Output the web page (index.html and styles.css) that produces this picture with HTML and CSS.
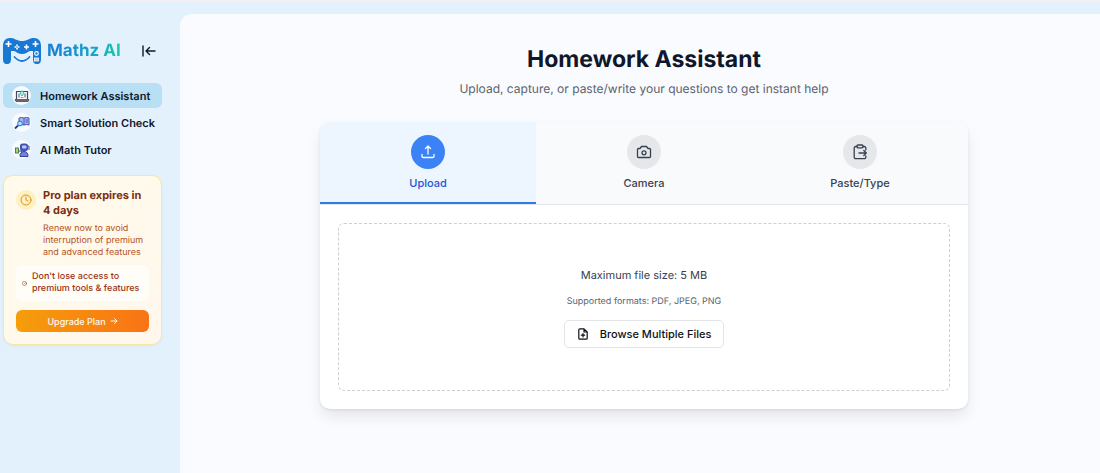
FILE: index.html
```html
<!DOCTYPE html>
<html lang="en">
<head>
<meta charset="utf-8">
<meta name="viewport" content="width=device-width, initial-scale=1">
<title>Mathz AI – Homework Assistant</title>
<link rel="stylesheet" href="styles.css">
</head>
<body>
<div class="app">
  <aside class="sidebar">
    <div class="brand">
      <a class="brand-link" href="#">
        <svg class="logo" viewBox="0 0 38 26" aria-hidden="true">
          <path fill="#1878d2" d="M0 8C0 3 2.500 0 7 0c4 0 5 1.500 7 2 2 .6 3 1 5 1s3-.4 5-1c2-.5 3-2 7-2 4.500 0 7 3 7 8v13c0 3-1 5-4 5s-4-2-4-5v-8c-2 0-3.500-.5-5 1-1.500 1.200-3.500 2-6 2s-4.500-.8-6-2c-1.500-1.500-3-1-5-1v8c0 3-1 5-4 5s-4-2-4-5z"/>
          <path d="M5.500 3v6M2.500 6h6M14 6.500v5M11.500 9h5M23.500 6.500v5M21 9h5M32.500 3v6M29.500 6h6" stroke="#fff" stroke-width="1.600" fill="none"/>
          <path d="M11.500 19q7.500 8 15 0" stroke="#1878d2" stroke-width="1.800" stroke-linecap="round" fill="none"/>
          <circle cx="33.500" cy="15.500" r="1.800" fill="none" stroke="#fff" stroke-width="1.200"/>
          <rect x="31.500" y="20" width="4" height="3" fill="#a6d2f5" stroke="#fff" stroke-width=".8"/>
          <circle cx="14" cy="9" r=".8" fill="#1878d2"/>
        </svg>
        <span class="brand-name">Mathz AI</span>
      </a>
      <button class="collapse" type="button" aria-label="Collapse sidebar">
        <svg viewBox="0 0 14 12" fill="none" stroke="currentColor" stroke-width="1.400" stroke-linecap="round" stroke-linejoin="round"><path d="M1 1v10M13 6H4M7.500 2.500 4 6l3.500 3.500"/></svg>
      </button>
    </div>
    <nav class="nav">
      <a class="nav-item active" href="#">
        <span class="nav-icon"><svg viewBox="0 0 16 16" fill="none">
          <path d="M2.500 11V3.500h11V11" stroke="#414b57" stroke-width="1.200"/><path d="M1 11.500h14l-1 2H2z" fill="#71666a" stroke="#414b57" stroke-width=".8"/>
          <path d="M5 5.500v4M11 5.500v4" stroke="#555b66"/><path d="M8 2.500 10 5 8 8 6 5zM6.500 9.500h3" stroke="#29bdb7" stroke-width=".9" fill="#b7eeeb"/>
        </svg></span>Homework Assistant</a>
      <a class="nav-item" href="#">
        <span class="nav-icon"><svg viewBox="0 0 16 16" fill="none">
          <path d="M5 3q2-1 5 0 3-1 5 0v7q-3-1-5 0-3-1-5 0z" fill="#a9b6f2" stroke="#4656b4"/><path d="M10 3v7M11.500 5H14M11.500 7H14" stroke="#4656b4"/>
          <circle cx="6" cy="8.500" r="2.400" fill="#9deafc" stroke="#2874b5"/><path d="m4 10.500-3 3" stroke="#283c86" stroke-width="1.800"/>
        </svg></span>Smart Solution Check</a>
      <a class="nav-item" href="#">
        <span class="nav-icon"><svg viewBox="0 0 16 16">
          <rect x="6" y="1.500" width="8" height="7.500" rx="2.500" fill="#4353b5"/><rect x="8" y="3.500" width="4.500" height="3" rx="1" fill="#bfcbfa"/>
          <path d="M6 14.500q0-5 4-5t4 5z" fill="#7182dc" stroke="#35439c"/><path d="M4.500 9h3v2" fill="none" stroke="#35439c"/><rect x="1.500" y="6" width="3" height="5" fill="#a5df50" stroke="#375c5b" stroke-width=".8"/><path d="M14 4h1v4" fill="none" stroke="#35439c"/>
        </svg></span>AI Math Tutor</a>
    </nav>
    <section class="plan">
      <div class="plan-head">
        <span class="plan-clock"><svg viewBox="0 0 24 24" fill="none" stroke="currentColor" stroke-width="2" stroke-linecap="round"><circle cx="12" cy="12" r="10"/><path d="M12 6v6l4 2"/></svg></span>
        <div>
          <h2 class="plan-title">Pro plan expires in 4 days</h2>
          <p class="plan-text">Renew now to avoid interruption of premium and advanced features</p>
        </div>
      </div>
      <p class="plan-note"><svg viewBox="0 0 24 24" fill="none" stroke="currentColor" stroke-width="2.500" stroke-linecap="round" aria-hidden="true"><circle cx="12" cy="12" r="10"/><path d="M12 12l5-4"/></svg><span>Don't lose access to premium tools &amp; features</span></p>
      <button class="upgrade" type="button">Upgrade Plan <svg viewBox="0 0 8 8" fill="none" stroke="currentColor" stroke-linecap="round" stroke-linejoin="round" aria-hidden="true"><path d="M1 4h6M4.500 1.500 7 4 4.500 6.500"/></svg></button>
    </section>
  </aside>
  <main class="main">
    <header class="intro">
      <h1 class="title">Homework Assistant</h1>
      <p class="subtitle">Upload, capture, or paste/write your questions to get instant help</p>
    </header>
    <section class="card">
      <div class="tabs" role="tablist">
        <button class="tab selected" type="button" role="tab" aria-selected="true">
          <span class="tab-icon"><svg viewBox="0 0 16 16"><path d="M8 10V2.500M5.500 4.500 8 2l2.500 2.500M2 10.500v1.700A1.300 1.300 0 0 0 3.300 13.500h9.400a1.300 1.300 0 0 0 1.300-1.300v-1.700"/></svg></span>Upload</button>
        <button class="tab" type="button" role="tab" aria-selected="false">
          <span class="tab-icon"><svg viewBox="0 0 16 16"><path d="M5.500 2.500h5L12 4.500h1.500a1 1 0 0 1 1 1v7a1 1 0 0 1-1 1h-11a1 1 0 0 1-1-1v-7a1 1 0 0 1 1-1H4z"/><circle cx="8" cy="8.800" r="2"/></svg></span>Camera</button>
        <button class="tab" type="button" role="tab" aria-selected="false">
          <span class="tab-icon"><svg viewBox="0 0 16 16"><rect x="5" y="1" width="6" height="2.800" rx="1"/><path d="M5 2.500H3.700A1.500 1.500 0 0 0 2.200 4v9.200a1.500 1.500 0 0 0 1.500 1.500h8.600a1.500 1.500 0 0 0 1.500-1.500V12M11 2.500h1.300A1.500 1.500 0 0 1 13.800 4v2M7 9h7M11.800 6.500 14.300 9l-2.500 2.500"/></svg></span>Paste/Type</button>
      </div>
      <div class="panel" role="tabpanel">
        <div class="dropzone">
          <p class="limit">Maximum file size: 5 MB</p>
          <p class="formats">Supported formats: PDF, JPEG, PNG</p>
          <button class="browse" type="button"><svg viewBox="0 0 12 12" fill="none" stroke="currentColor" stroke-width="1.200" stroke-linejoin="round" stroke-linecap="round" aria-hidden="true"><path d="M7 .8H2.800a1 1 0 0 0-1 1v8.400a1 1 0 0 0 1 1h6.400a1 1 0 0 0 1-1V4zV4h3.200M6 5.500v3.400M4.300 7.200h3.400"/></svg>Browse Multiple Files</button>
        </div>
      </div>
    </section>
  </main>
</div>
</body>
</html>
```
FILE: styles.css
```css
* { box-sizing: border-box; }
body {
  margin: 0;
  font-family: Inter, "Liberation Sans", sans-serif;
  font-size: 11px;
  color: #0f172a;
  background: #e3f1fc;
  text-rendering: geometricPrecision;
}
h1, h2, p { margin: 0; }
a { color: inherit; text-decoration: none; }
button { font: inherit; cursor: pointer; }
svg { display: block; flex: none; }

.app {
  display: grid;
  grid-template-columns: 180px 1fr;
  min-height: 100vh;
  border-top: 2px solid #f6eff1;
}
.sidebar { padding: 34px 18px 0 3px; }
.brand {
  display: flex;
  align-items: center;
  justify-content: space-between;
  height: 30px;
  padding-right: 6px;
}
.brand-link { display: flex; align-items: center; gap: 6px; }
.logo { width: 38px; height: 26px; }
.brand-name {
  font-size: 17px;
  font-weight: 700;
  line-height: 26px;
  color: transparent;
  background: linear-gradient(90deg, #1b82d1 10%, #1aa0c8 60%, #19c9a9);
  background-clip: text;
  -webkit-background-clip: text;
}
.collapse { padding: 0; border: 0; background: none; color: #111827; }
.collapse svg { width: 14px; height: 12px; }

.nav { display: grid; gap: 2px; margin-top: 17px; }
.nav-item {
  display: flex;
  align-items: center;
  gap: 9px;
  height: 25px;
  padding-left: 9px;
  border-radius: 6px;
  font-weight: 600;
  white-space: nowrap;
}
.nav-item.active { background: #b9dff5; }
.nav-icon {
  display: grid;
  place-items: center;
  width: 19px;
  height: 19px;
  border-radius: 50%;
  background: #f8fcff;
}
.nav-icon svg { width: 16px; height: 16px; }

.plan {
  margin-top: 13px;
  padding: 12px;
  border: 1px solid #f5e7a4;
  border-radius: 10px;
  background: linear-gradient(135deg, #fffbeb, #fff7ed);
  box-shadow: 0 1px 3px #0000000d;
}
.plan-head { display: flex; gap: 7px; }
.plan-clock {
  display: grid;
  place-items: center;
  flex: none;
  width: 20px;
  height: 20px;
  margin-top: 2px;
  border-radius: 50%;
  background: #fef0c0;
  color: #e09419;
}
.plan-clock svg { width: 12px; height: 12px; }
.plan-title { font-size: 11px; line-height: 15px; font-weight: 700; color: #7c2d12; }
.plan-text { margin-top: 5px; font-size: 9px; line-height: 12px; color: #b4531c; }
.plan-note {
  display: flex;
  align-items: center;
  gap: 5px;
  margin-top: 6px;
  padding: 6px;
  border-radius: 6px;
  background: #fffdf8;
  font-size: 9px;
  line-height: 12px;
  font-weight: 500;
  color: #9a3412;
}
.plan-note svg { width: 5px; height: 5px; }
.upgrade {
  display: flex;
  align-items: center;
  justify-content: center;
  gap: 4px;
  width: 100%;
  height: 22px;
  margin-top: 9px;
  border: 0;
  border-radius: 6px;
  background: linear-gradient(90deg, #f59e0b, #f97316);
  color: #fffaf0;
  font-size: 9px;
  font-weight: 500;
}
.upgrade svg { width: 8px; height: 8px; }

.main {
  margin-top: 12px;
  padding: 29px 16px 32px 24px;
  border-top-left-radius: 12px;
  background: #fafbff;
}
.intro { text-align: center; }
.title { font-size: 23px; line-height: 32px; font-weight: 700; }
.subtitle { margin-top: 4px; font-size: 12px; line-height: 20px; color: #5b626e; }
.card {
  max-width: 648px;
  margin: 23px auto 0;
  overflow: hidden;
  border-radius: 10px;
  background: #fff;
  box-shadow: 0 8px 16px -2px #0000001a, 0 1px 3px #00000014;
}
.tabs {
  display: grid;
  grid-template-columns: repeat(3, 1fr);
  border-bottom: 1px solid #e2e5ea;
  background: #f9fafc;
}
.tab {
  display: flex;
  flex-direction: column;
  align-items: center;
  gap: 6px;
  padding: 13px 8px 11px;
  border: 0;
  border-bottom: 2px solid transparent;
  background: none;
  color: #374151;
  font-weight: 500;
  line-height: 16px;
}
.tab.selected { background: #edf5ff; border-bottom-color: #2f7cdf; color: #1d56d2; }
.tab-icon {
  display: grid;
  place-items: center;
  width: 34px;
  height: 34px;
  border-radius: 50%;
  background: #e5e7eb;
}
.tab.selected .tab-icon { background: #3b82f6; color: #fff; }
.tab-icon svg {
  width: 16px;
  height: 16px;
  fill: none;
  stroke: currentColor;
  stroke-width: 1.3;
  stroke-linecap: round;
  stroke-linejoin: round;
}
.panel { padding: 18px; }
.dropzone {
  display: flex;
  flex-direction: column;
  align-items: center;
  padding: 42px 16px;
  border: 1px dashed #cdcfd3;
  border-radius: 6px;
}
.limit { line-height: 18px; color: #374151; }
.formats { margin-top: 11px; font-size: 9px; line-height: 14px; color: #5b626e; }
.browse {
  display: flex;
  align-items: center;
  gap: 11px;
  height: 28px;
  margin-top: 11px;
  padding: 0 12px;
  border: 1px solid #e3e5e9;
  border-radius: 5px;
  background: #fff;
  color: #0f1118;
  font-weight: 500;
}
.browse svg { width: 12px; height: 12px; }
```
